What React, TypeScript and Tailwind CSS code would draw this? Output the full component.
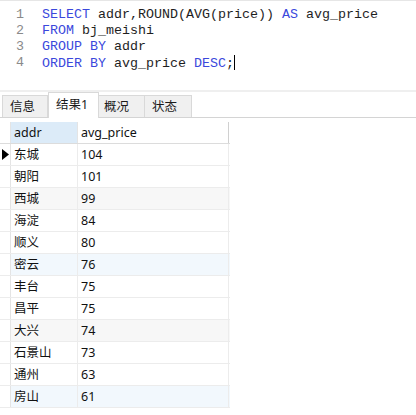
const rows: [string, number][] = [
  ["东城", 104],
  ["朝阳", 101],
  ["西城", 99],
  ["海淀", 84],
  ["顺义", 80],
  ["密云", 76],
  ["丰台", 75],
  ["昌平", 75],
  ["大兴", 74],
  ["石景山", 73],
  ["通州", 63],
  ["房山", 61],
];

const rowBg = (i: number) =>
  i === 2 || i === 8 ? "bg-[#f7f7f7]" : i === 5 || i === 11 ? "bg-[#f2f8fd]" : "bg-white";

function Kw({ children }: { children: React.ReactNode }) {
  return <span className="text-[#3a48dc]">{children}</span>;
}

export default function App() {
  const ui = { fontFamily: '"Noto Sans", "Noto Sans CJK SC", sans-serif' };
  const code = [
    <>
      <Kw>SELECT</Kw> addr,ROUND(AVG(price)) <Kw>AS</Kw> avg_price
    </>,
    <>
      <Kw>FROM</Kw> bj_meishi
    </>,
    <>
      <Kw>GROUP BY</Kw> addr
    </>,
    <>
      <Kw>ORDER BY</Kw> avg_price <Kw>DESC</Kw>;
      <span className="inline-block w-px h-[15px] bg-black align-[-3px]" />
    </>,
  ];

  return (
    <div className="w-[416px] h-[415px] bg-white overflow-hidden" style={ui}>
      {/* editor */}
      <div className="h-[90px] border-t border-[#e6e6e6] pt-[6px]">
        {code.map((line, i) => (
          <div
            key={i}
            className="flex h-4 leading-4 text-[13.33px] whitespace-pre text-[#1e1e1e]"
            style={{ fontFamily: '"Liberation Mono", monospace' }}
          >
            <span className="w-[24px] text-right text-[#8a8a8a]">{i + 1}</span>
            <span className="pl-[18px]">{line}</span>
          </div>
        ))}
      </div>
      <div className="h-[2px] bg-[#efefef]" />

      {/* tabs */}
      <div className="h-[26px] flex items-end pl-[2px] border-b border-[#d4d4d4] text-[12.5px] text-[#1a1a1a]">
        <div className="h-[22px] w-[46px] flex items-center pl-[7px] pt-[2px] bg-[#f0f0f0] border border-b-0 border-[#d9d9d9]">
          信息
        </div>
        <div className="h-[26px] w-[51px] -mb-px flex items-center pl-[7px] bg-white border border-b-0 border-[#d9d9d9]">
          结果1
        </div>
        <div className="h-[22px] w-[46px] flex items-center pl-[5px] pt-[2px] bg-[#f0f0f0] border border-b-0 border-l-0 border-[#d9d9d9]">
          概况
        </div>
        <div className="h-[22px] w-[47px] flex items-center pl-[7px] pt-[2px] bg-[#f0f0f0] border border-b-0 border-l-0 border-[#d9d9d9]">
          状态
        </div>
      </div>

      {/* grid */}
      <div className="mt-[4px] w-[230px] text-[12.5px] text-[#111]">
        <div className="flex h-[22px] border-b border-[#dcdcdc]">
          <div className="w-[11px] border-r border-[#e4e4e4]" />
          <div className="w-[67px] bg-[#dcebf8] border-r border-[#e4e4e4] flex items-center pl-[3px] pt-[2px]">addr</div>
          <div className="w-[151px] border-r border-[#d0d0d0] flex items-center pl-[3px] pt-[2px]">avg_price</div>
        </div>
        {rows.map(([addr, price], i) => (
          <div key={addr} className={`flex h-[22px] border-b border-[#ececec] ${rowBg(i)}`}>
            <div className="w-[11px] bg-white border-r border-[#e4e4e4] flex items-center justify-center">
              {i === 0 && (
                <svg width="7" height="11" viewBox="0 0 7 11">
                  <path d="M0 0 L7 5.5 L0 11 Z" fill="#000" />
                </svg>
              )}
            </div>
            <div className="w-[67px] border-r border-[#ececec] flex items-center pl-[3px] pt-[2px]">{addr}</div>
            <div className="w-[151px] border-r border-[#ececec] flex items-center pl-[3px] pt-[2px]">{price}</div>
          </div>
        ))}
      </div>
    </div>
  );
}
